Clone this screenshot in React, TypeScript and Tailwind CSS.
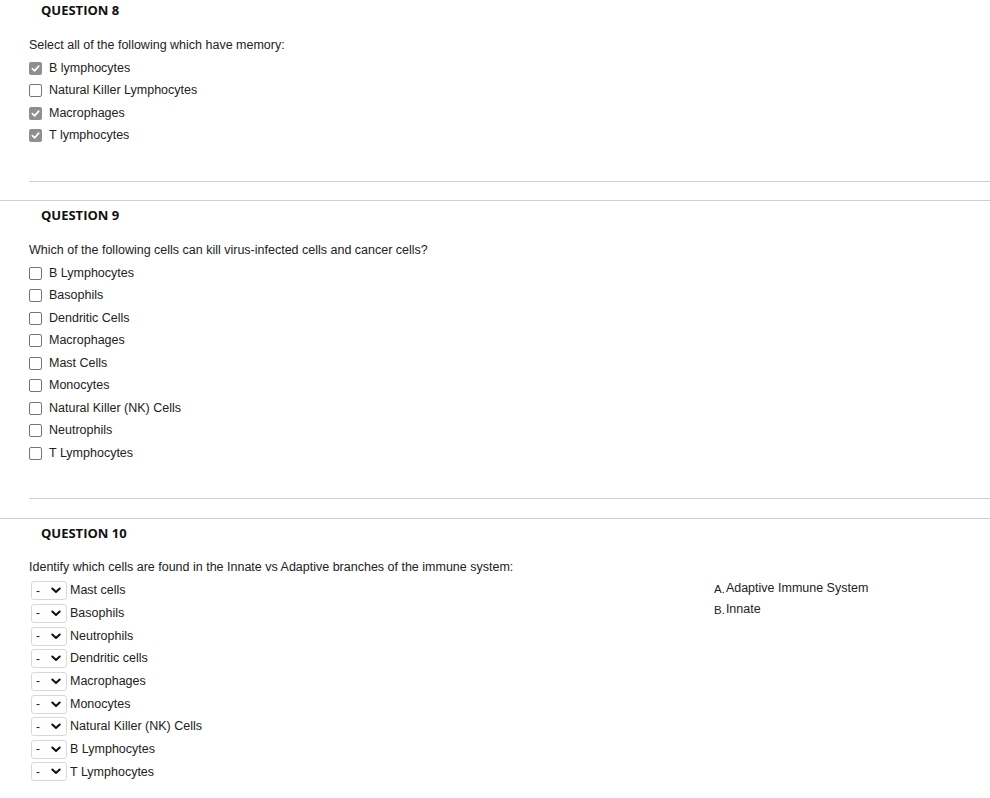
import React from "react";

const CheckBox = ({ checked }: { checked: boolean }) =>
  checked ? (
    <span className="flex h-[13px] w-[13px] shrink-0 items-center justify-center rounded-[2px] bg-[#8f8f8f]">
      <svg width="9" height="9" viewBox="0 0 10 10">
        <path d="M1.5 5.2 L4 7.6 L8.6 2.4" fill="none" stroke="#fff" strokeWidth="1.9" strokeLinecap="round" strokeLinejoin="round" />
      </svg>
    </span>
  ) : (
    <span className="h-[13px] w-[13px] shrink-0 rounded-[2px] border border-[#767676] bg-white" />
  );

const Heading = ({ children }: { children: React.ReactNode }) => (
  <div className="flex h-[22px] items-center pl-[41px] text-[13px] font-bold text-[#111] [font-family:'Open_Sans',sans-serif]">
    {children}
  </div>
);

const QText = ({ children }: { children: React.ReactNode }) => (
  <div className="mt-[12px] mb-[1px] flex h-[22px] items-center pl-[29px]">{children}</div>
);

const Option = ({ label, checked = false }: { label: string; checked?: boolean }) => (
  <div className="flex h-[22.5px] items-center gap-[7px] pl-[29px]">
    <CheckBox checked={checked} />
    <span>{label}</span>
  </div>
);

const SelectRow = ({ label }: { label: string }) => (
  <div className="flex h-[22.65px] items-center pl-[31px]">
    <span className="flex h-[19px] w-[36px] items-center justify-between rounded-[3px] border border-[#d9d9d9] bg-white pl-[4px] pr-[5px]">
      <span className="text-[12px] leading-none">-</span>
      <svg width="10" height="7" viewBox="0 0 10 7">
        <path d="M1.3 1.5 L5 5 L8.7 1.5" fill="none" stroke="#111" strokeWidth="2" strokeLinecap="round" strokeLinejoin="round" />
      </svg>
    </span>
    <span className="ml-[3px]">{label}</span>
  </div>
);

const InnerRule = () => <div className="ml-[29px] h-px bg-[#cfcfcf]" />;
const FullRule = () => <div className="h-px bg-[#cfcfcf]" />;

export default function App() {
  return (
    <div className="h-[798px] w-[990px] overflow-hidden bg-white text-[12.5px] text-[#222] [font-family:'Liberation_Sans',Arial,sans-serif]">
      {/* Question 8 */}
      <Heading>QUESTION 8</Heading>
      <QText>Select all of the following which have memory:</QText>
      <Option label="B lymphocytes" checked />
      <Option label="Natural Killer Lymphocytes" />
      <Option label="Macrophages" checked />
      <Option label="T lymphocytes" checked />
      <div className="mt-[34px]">
        <InnerRule />
      </div>
      <div className="mt-[18px]">
        <FullRule />
      </div>

      {/* Question 9 */}
      <div className="mt-[4px]">
        <Heading>QUESTION 9</Heading>
      </div>
      <QText>Which of the following cells can kill virus-infected cells and cancer cells?</QText>
      {[
        "B Lymphocytes",
        "Basophils",
        "Dendritic Cells",
        "Macrophages",
        "Mast Cells",
        "Monocytes",
        "Natural Killer (NK) Cells",
        "Neutrophils",
        "T Lymphocytes",
      ].map((l) => (
        <Option key={l} label={l} />
      ))}
      <div className="mt-[33px]">
        <InnerRule />
      </div>
      <div className="mt-[19px]">
        <FullRule />
      </div>

      {/* Question 10 */}
      <div className="mt-[4px]">
        <Heading>QUESTION 10</Heading>
      </div>
      <QText>Identify which cells are found in the Innate vs Adaptive branches of the immune system:</QText>
      <div className="flex">
        <div className="w-[700px]">
          {[
            "Mast cells",
            "Basophils",
            "Neutrophils",
            "Dendritic cells",
            "Macrophages",
            "Monocytes",
            "Natural Killer (NK) Cells",
            "B Lymphocytes",
            "T Lymphocytes",
          ].map((l) => (
            <SelectRow key={l} label={l} />
          ))}
        </div>
        <div className="ml-[14px] -mt-[2px] flex flex-col">
          <div className="flex h-[21px] items-center">
            <span className="mr-[1px] translate-y-[2px] text-[11.5px]">A.</span>
            <span>Adaptive Immune System</span>
          </div>
          <div className="flex h-[21px] items-center">
            <span className="mr-[1px] translate-y-[2px] text-[11.5px]">B.</span>
            <span>Innate</span>
          </div>
        </div>
      </div>
    </div>
  );
}
